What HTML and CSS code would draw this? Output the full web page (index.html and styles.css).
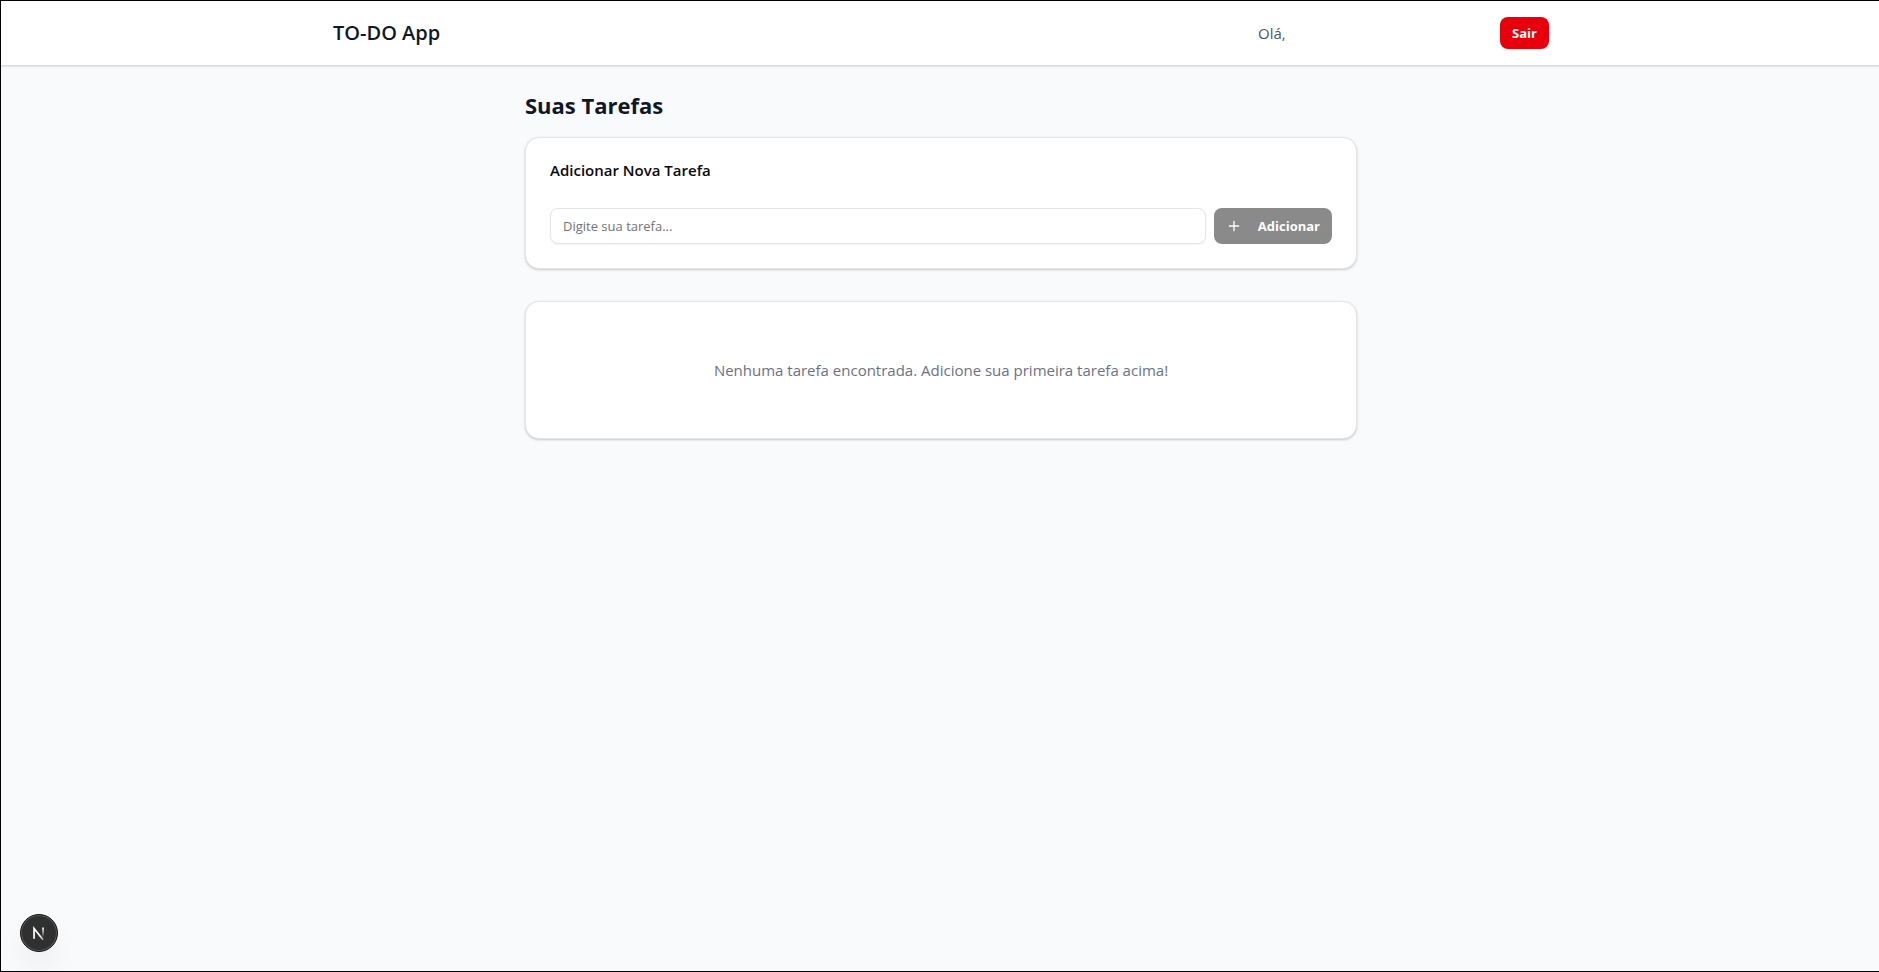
FILE: index.html
```html
<!DOCTYPE html>
<html lang="pt-BR">
<head>
<meta charset="utf-8">
<meta name="viewport" content="width=device-width, initial-scale=1">
<title>TO-DO App</title>
<link rel="stylesheet" href="styles.css">
</head>
<body class="page">
<header class="header">
  <div class="header-inner">
    <h1 class="brand">TO-DO App</h1>
    <div class="account">
      <span class="greeting">Olá,</span>
      <button class="button button-danger" type="button">Sair</button>
    </div>
  </div>
</header>
<main class="main">
  <h2 class="heading">Suas Tarefas</h2>
  <div class="cards">
    <section class="card">
      <h3 class="card-title"><label for="task">Adicionar Nova Tarefa</label></h3>
      <form class="task-form">
        <input class="task-input" id="task" type="text" placeholder="Digite sua tarefa...">
        <button class="button button-add" type="submit" disabled>
          <svg class="plus" viewBox="0 0 24 24" fill="none" stroke="currentColor" stroke-width="2" stroke-linecap="round" stroke-linejoin="round" aria-hidden="true"><path d="M5 12h14M12 5v14"/></svg>
          Adicionar
        </button>
      </form>
    </section>
    <section class="card card-empty">
      <p class="empty-text">Nenhuma tarefa encontrada. Adicione sua primeira tarefa acima!</p>
    </section>
  </div>
</main>
<button class="dev-badge" type="button" aria-label="Next.js">
  <svg class="dev-logo" viewBox="0 0 40 40" fill="none" aria-hidden="true">
    <defs>
      <linearGradient id="diag" x1="17" y1="16" x2="27" y2="29" gradientUnits="userSpaceOnUse"><stop offset="0.5" stop-color="#fff"/><stop offset="1" stop-color="#fff" stop-opacity="0.3"/></linearGradient>
      <linearGradient id="stem" x1="25" y1="14" x2="25" y2="25" gradientUnits="userSpaceOnUse"><stop stop-color="#fff"/><stop offset="1" stop-color="#fff" stop-opacity="0"/></linearGradient>
    </defs>
    <path d="M14.5 26.5V15L24.5 27.5" stroke="url(#diag)" stroke-width="1.9"/>
    <path d="M24.5 14v10.5" stroke="url(#stem)" stroke-width="1.9"/>
  </svg>
</button>
</body>
</html>
```
FILE: styles.css
```css
*, *::before, *::after { box-sizing: border-box; }
html { overflow-x: hidden; }
h1, h2, h3, p { margin: 0; }
button, input { font: inherit; }

.page {
  margin: 0 -2px 0 0;
  min-height: 100vh;
  border: solid #000;
  border-width: 1px 0 1px 1px;
  background: #f9fafb;
  color: #0a0a0a;
  font: 15px/24px "Segoe UI", "Open Sans", "Noto Sans", sans-serif;
}

.header {
  background: #fff;
  box-shadow: 0 1px 3px rgba(0, 0, 0, 0.1), 0 1px 2px rgba(0, 0, 0, 0.1);
}
.header-inner {
  display: flex;
  align-items: center;
  justify-content: space-between;
  max-width: 1280px;
  height: 64px;
  margin: 0 auto;
  padding: 0 32px;
}
.brand {
  color: #101828;
  font-size: 20px;
  font-weight: 600;
  line-height: 28px;
}
.account {
  display: flex;
  align-items: center;
  justify-content: space-between;
  width: 291px;
}
.greeting { color: #4a5565; }

.button {
  display: inline-flex;
  align-items: center;
  justify-content: center;
  border: 0;
  border-radius: 8px;
  color: #fff;
  font-size: 13px;
  font-weight: 700;
  line-height: 20px;
}
.button-danger {
  height: 32px;
  padding: 0 12px;
  background: #e7000b;
}
.button-add {
  gap: 16px;
  height: 36px;
  padding: 0 12px;
  background: #171717;
  opacity: 0.5;
}
.plus { width: 16px; height: 16px; }

.main {
  max-width: 896px;
  margin: 0 auto;
  padding: 24px 32px;
}
.heading {
  margin-bottom: 16px;
  color: #101828;
  font-size: 22px;
  font-weight: 700;
  line-height: 32px;
}
.cards { display: grid; gap: 32px; }
.card {
  padding: 24px;
  background: #fff;
  border: 1px solid #e5e5e5;
  border-radius: 14px;
  box-shadow: 0 1px 3px rgba(0, 0, 0, 0.1), 0 1px 2px rgba(0, 0, 0, 0.1);
}
.card-title {
  margin-bottom: 30px;
  font-size: 15px;
  font-weight: 600;
  line-height: 16px;
}
.task-form { display: flex; gap: 8px; }
.task-input {
  flex: 1;
  min-width: 0;
  height: 36px;
  padding: 4px 12px;
  background: #fff;
  border: 1px solid #e5e5e5;
  border-radius: 8px;
  box-shadow: 0 1px 2px rgba(0, 0, 0, 0.05);
  font-size: 13px;
}
.task-input::placeholder { color: #737373; opacity: 1; }
.card-empty { padding: 56px 24px; text-align: center; }
.empty-text { color: #6a7282; }

.dev-badge {
  position: fixed;
  left: 20px;
  bottom: 20px;
  width: 38px;
  height: 38px;
  padding: 0;
  background: #303030;
  border: 1px solid #171717;
  border-radius: 50%;
  box-shadow: inset 0 0 0 1px #5a5a5a, 0 16px 32px -8px rgba(0, 0, 0, 0.14);
}
.dev-logo { display: block; width: 100%; height: 100%; }
```
